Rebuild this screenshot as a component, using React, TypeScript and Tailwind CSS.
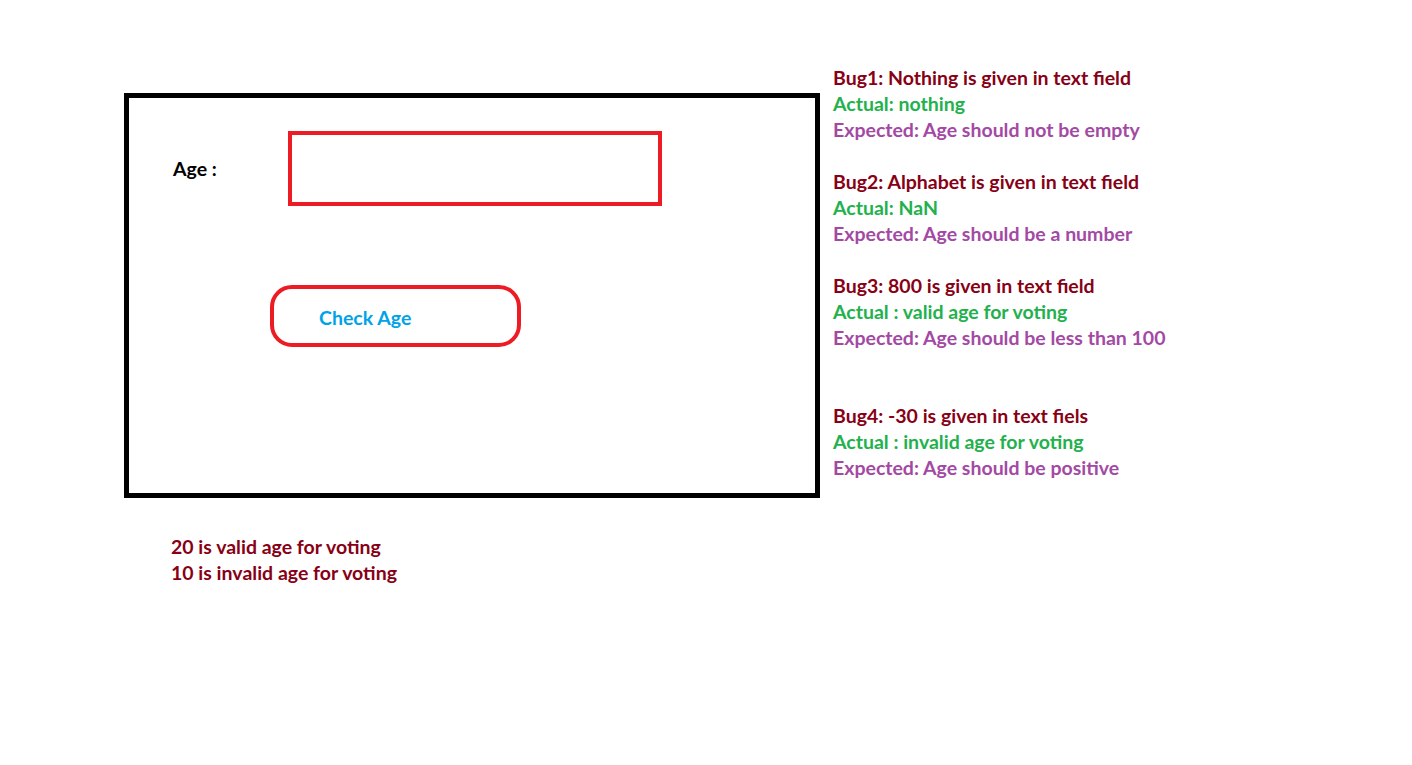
const bugs = [
  {
    title: "Bug1: Nothing is given in text field",
    actual: "Actual: nothing",
    expected: "Expected: Age should not be empty",
    gap: "mt-0",
  },
  {
    title: "Bug2: Alphabet is given in text field",
    actual: "Actual: NaN",
    expected: "Expected: Age should be a number",
    gap: "mt-[26px]",
  },
  {
    title: "Bug3: 800 is given in text field",
    actual: "Actual : valid age for voting",
    expected: "Expected: Age should be less than 100",
    gap: "mt-[26px]",
  },
  {
    title: "Bug4: -30 is given in text fiels",
    actual: "Actual : invalid age for voting",
    expected: "Expected: Age should be positive",
    gap: "mt-[52px]",
  },
];

export default function App() {
  return (
    <div className="min-h-[765px] w-[1412px] bg-white font-['Lato',sans-serif] text-[19.5px] font-bold leading-[26px]">
      <div className="flex items-start">
        <div className="ml-[124px] mt-[93px]">
          <div className="h-[405px] w-[696px] border-[5px] border-black">
            <div className="flex items-center pt-[33px]">
              <span className="w-[159px] pl-[44px] text-black">Age :</span>
              <div className="h-[75px] w-[374px] border-4 border-[#ed1c24]" />
            </div>
            <div className="ml-[141px] mt-[79px] flex h-[62px] w-[251px] items-center rounded-[22px] border-4 border-[#ed1c24] pl-[45px] pt-[3px]">
              <span className="text-[#00a2e8]">Check Age</span>
            </div>
          </div>
          <div className="ml-[47px] mt-[36px] text-[#880015]">
            <div>20 is valid age for voting</div>
            <div>10 is invalid age for voting</div>
          </div>
        </div>
        <div className="ml-[13px] mt-[65px]">
          {bugs.map((b) => (
            <div key={b.title} className={b.gap}>
              <div className="text-[#880015]">{b.title}</div>
              <div className="text-[#22b14c]">{b.actual}</div>
              <div className="text-[#a349a4]">{b.expected}</div>
            </div>
          ))}
        </div>
      </div>
    </div>
  );
}
